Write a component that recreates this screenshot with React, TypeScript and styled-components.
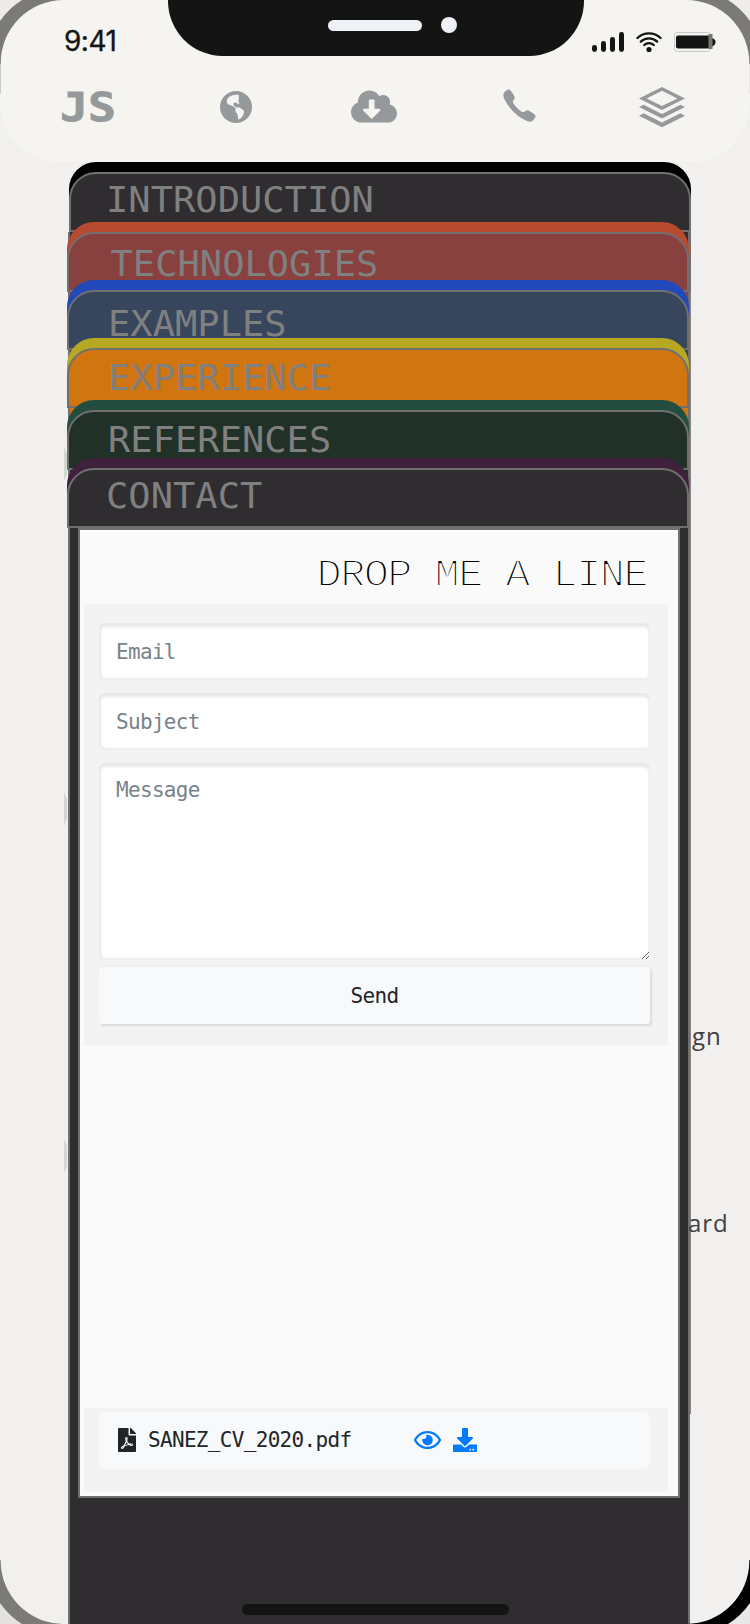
import React from "react";
import styled, { createGlobalStyle } from "styled-components";
import { FaCloudDownloadAlt, FaDownload, FaFilePdf, FaRegEye } from "react-icons/fa";
import { IoIosCall } from "react-icons/io";
import { ImStack } from "react-icons/im";

const MONO = '"DejaVu Sans Mono", monospace';
const LINE = "#717070";

const GlobalStyle = createGlobalStyle`
  *, *::before, *::after { box-sizing: border-box; }
  body { margin: 0; background: #f1f0ee; }
`;

const Screen = styled.div`
  position: relative;
  width: 750px;
  height: 1624px;
  overflow: hidden;
  background: #f1f0ee;
  font-family: ${MONO};
`;

const Header = styled.header`
  height: 162px;
  border-radius: 0 0 60px 60px;
  background: #f5f4f0;
  color: #96999b;
`;

const StatusBar = styled.div`
  display: flex;
  justify-content: space-between;
  height: 56px;
`;

const Clock = styled.div`
  width: 168px;
  padding: 22px 0 0 64px;
  font: 400 28px/38px Inter, sans-serif;
  letter-spacing: -0.5px;
  color: #141414;
  -webkit-text-stroke: 0.3px #141414;
`;

const Notch = styled.div`
  display: flex;
  gap: 19px;
  width: 416px;
  padding: 17px 0 0 160px;
  border-radius: 0 0 55px 55px;
  background: #141414;
`;

const Speaker = styled.div`
  width: 94px;
  height: 11px;
  margin-top: 3px;
  border-radius: 6px;
  background: #eef2f6;
`;

const Camera = styled.div`
  width: 16px;
  height: 16px;
  border-radius: 50%;
  background: #eef2f6;
`;

const StatusIcons = styled.div`
  width: 166px;
  padding: 28px 0 0 8px;
  svg { display: block; }
`;

const Nav = styled.nav`
  display: flex;
  align-items: center;
  height: 102px;
  padding-left: 60px;
`;

const Logo = styled.div`
  width: 54px;
  height: 46px;
  font: bold 39px/46px ${MONO};
  -webkit-text-stroke: 0.8px #96999b;
  transform: translateY(1px) scaleX(1.19);
  transform-origin: 0 0;
`;

const NavItem = styled.div<{ $gap: number; $lift?: number }>`
  margin-left: ${(p) => p.$gap}px;
  padding-bottom: ${(p) => p.$lift ?? 0}px;
  svg { display: block; }
`;

const Stack = styled.main`
  display: flex;
  flex-direction: column;
  width: 623px;
  height: 1462px;
  margin-left: 68px;
`;

const Row = styled.section<{ $height: number; $back: string }>`
  display: flex;
  flex: none;
  flex-direction: column;
  justify-content: flex-end;
  height: ${(p) => p.$height}px;
  border: solid ${LINE};
  border-width: 0 3px 0 2px;
  background: ${(p) => p.$back};
`;

const RowFirst = styled(Row)`
  border-color: transparent;
`;

const Folder = styled.div<{ $edge: string; $shift: number }>`
  flex: none;
  height: 70px;
  margin: 0 ${(p) => -1 - p.$shift}px 0 ${(p) => -3 + p.$shift}px;
  padding-top: 10px;
  border-radius: 27px 27px 0 0;
  background: ${(p) => p.$edge};
`;

const Face = styled.div<{ $fill: string; $x: number; $y: number }>`
  height: 60px;
  padding: ${(p) => p.$y}px 0 0 ${(p) => p.$x}px;
  border: 2px solid ${LINE};
  border-radius: 27px 27px 0 0;
  background: ${(p) => p.$fill};
`;

const Label = styled.h2`
  margin: 0;
  font: 37px/40px ${MONO};
  letter-spacing: 0.05px;
  color: #808080;
  transform: scaleY(0.94);
  transform-origin: 0 0;
`;

const Body = styled.section`
  flex: 1;
  padding-left: 8px;
  border: solid ${LINE};
  border-width: 0 3px 0 2px;
  background: #2f2d30;
`;

const Panel = styled.div`
  display: flex;
  flex-direction: column;
  width: 602px;
  height: 970px;
  padding: 0 10px 4px 4px;
  border: 2px solid ${LINE};
  background: #fafafa;
`;

const Title = styled.h1`
  height: 74px;
  margin: 0;
  padding: 22px 21px 0 0;
  font: 42px/44px "Liberation Mono", monospace;
  letter-spacing: -1.6px;
  text-align: right;
  color: #000;
  -webkit-text-stroke: 2.1px #fafafa;
  transform: translateY(1px) scaleY(0.93);
  transform-origin: 0 60px;
`;

const Form = styled.form`
  display: flex;
  flex-direction: column;
  align-items: flex-start;
  height: 442px;
  padding: 19px 15px 0;
  background: #f3f3f3;
`;

const smallText = `
  font: 21px/30px ${MONO};
  letter-spacing: -0.68px;
`;

const fieldLook = `
  display: block;
  width: 551px;
  margin: 0 0 13px;
  padding: 0 17px;
  border: 0;
  border-radius: 6px;
  outline: 0;
  background: #fff;
  box-shadow: inset 0 3px 3px 1px #e8e8e8, inset 1px -1px 2px 1px #ececec;
  color: #212529;
  ${smallText}
  &::placeholder { color: #78828a; opacity: 1; }
`;

const Field = styled.input`
  ${fieldLook}
  height: 57px;
`;

const Message = styled.textarea`
  ${fieldLook}
  height: 197px;
  margin-bottom: 7px;
  padding-top: 12px;
  resize: vertical;
`;

const Send = styled.button`
  width: 551px;
  height: 57px;
  border: 0;
  border-radius: 3px;
  background: #f8f9fb;
  box-shadow: 2px 2px 2px #dcdcdc, 0 0 2px #e8e8e8;
  color: #212529;
  ${smallText}
`;

const Download = styled.div`
  height: 84px;
  margin-top: auto;
  padding: 4px 15px 0;
  background: #f3f3f3;
`;

const FileCard = styled.div`
  display: flex;
  align-items: center;
  width: 551px;
  height: 57px;
  padding: 0 0 2px 19px;
  border-radius: 7px;
  background: #f8f9fb;
  color: #212529;
`;

const FileName = styled.span`
  width: 266px;
  margin-left: 12px;
  ${smallText}
`;

const Action = styled.a`
  margin-right: 12px;
  color: #007bff;
  svg { display: block; }
`;

const HomeBar = styled.div`
  position: absolute;
  left: 242px;
  top: 1604px;
  width: 267px;
  height: 11px;
  border-radius: 6px;
  background: #141414;
`;

const Peek = styled.span<{ $x: number; $y: number }>`
  position: absolute;
  left: ${(p) => p.$x}px;
  top: ${(p) => p.$y}px;
  font: 400 24px/30px "Open Sans", sans-serif;
  letter-spacing: 0.9px;
  color: #403e41;
`;

const Arrow = styled.svg<{ $y: number }>`
  position: absolute;
  left: 64px;
  top: ${(p) => p.$y}px;
`;

const EdgeLine = styled.div`
  position: absolute;
  left: 690px;
  top: 290px;
  width: 1px;
  height: 1124px;
  background: #8a8583;
`;

const EdgeTail = styled.div`
  position: absolute;
  left: 690px;
  top: 1414px;
  width: 1px;
  height: 210px;
  background: #f1f0ee;
`;

const CornerArt = styled.svg<{ $right?: boolean; $bottom?: boolean }>`
  position: absolute;
  ${(p) => (p.$right ? "right: 0;" : "left: 0;")}
  ${(p) => (p.$bottom ? "bottom: 0;" : "top: 0;")}
  transform: scale(${(p) => (p.$right ? -1 : 1)}, ${(p) => (p.$bottom ? -1 : 1)});
`;

interface CornerProps {
  ring: string;
  outside: string;
  right?: boolean;
  bottom?: boolean;
}

function Corner({ ring, outside, right, bottom }: CornerProps) {
  return (
    <CornerArt width="96" height="96" $right={right} $bottom={bottom}>
      <path d="M0 0H64A63 63 0 0 0 0.7 64H0Z" fill={ring} />
      <path d="M0 0H22A75 75 0 0 0 0 21Z" fill={outside} />
      {!bottom && <path d="M0.5 60V94" stroke={ring} strokeOpacity={right ? 0.1 : 0.35} />}
    </CornerArt>
  );
}

function Globe() {
  return (
    <svg width="32" height="32" viewBox="0 0 32 32">
      <circle cx="16" cy="16" r="16" fill="currentColor" />
      <path
        d="M18.8 3.8C14.5 3.2 10 4.3 7.6 7.4C6.3 9.3 6.6 12 8.3 13.2C9.8 14.3 11.8 14.3 13.1 15.2C14.5 16 15.4 17.4 16.6 17.6L16.9 16.2C15.6 16 14.1 15 13.5 13.7C13 12.3 14.3 11.2 15.7 11.5C17 11.8 17.4 13 18.9 13.2L19.3 11.7C18.2 11.1 18.1 9.3 18.8 8.2C19.4 7 18.2 5.3 18.8 3.8Z"
        fill="#f5f4f0"
      />
      <path
        d="M15.7 17.8C17.3 15.8 19.4 15.8 20.7 17.2C22.2 18.3 24.2 18.8 24 21C23.8 24.5 21.4 27.3 18.3 28.8C17.7 26.3 18.2 24.2 17 22.4C15.6 21.2 14.7 19.6 15.7 17.8Z"
        fill="#f5f4f0"
      />
    </svg>
  );
}

function StatusGlyphs() {
  return (
    <svg width="140" height="28" viewBox="592 28 140 28">
      <g fill="#141414">
        <rect x="592" y="45" width="5" height="7" rx="2.4" />
        <rect x="601" y="41" width="5" height="11" rx="2.4" />
        <rect x="610" y="37" width="5" height="15" rx="2.4" />
        <rect x="619" y="32" width="5" height="20" rx="2.4" />
        <circle cx="649" cy="49.5" r="2.6" />
        <path d="M712 38Q715.500 39 715.500 42T712 46.500Z" />
        <rect x="676" y="35.500" width="34" height="13" rx="2" />
      </g>
      <g fill="none" stroke="#141414" strokeWidth="2.3" strokeLinecap="round">
        <path d="M644.2 45A7 7 0 0 1 653.8 45" />
        <path d="M640.8 41.600A12 12 0 0 1 657.2 41.600" />
        <path d="M637.4 38A17 17 0 0 1 660.6 38" />
      </g>
      <rect x="674.500" y="32.500" width="36" height="19" rx="3" fill="none" stroke="#c9c8c5" />
      <rect x="708.500" y="34" width="4" height="15" fill="#777673" />
    </svg>
  );
}

const folders = [
  { label: "INTRODUCTION", edge: "#000", fill: "#2f2d30", back: "transparent", height: 70, shift: 2, x: 35, y: 7.5 },
  { label: "TECHNOLOGIES", edge: "#b84a30", fill: "#88413f", back: "#2f2d30", height: 60, shift: 0, x: 41.5, y: 11.5 },
  { label: "EXAMPLES", edge: "#2149ba", fill: "#37465d", back: "#88413f", height: 58, shift: 0, x: 39, y: 13.5 },
  { label: "EXPERIENCE", edge: "#b6a823", fill: "#d17511", back: "#37465d", height: 58, shift: 0, x: 39, y: 9.5 },
  { label: "REFERENCES", edge: "#234e3f", fill: "#223128", back: "#d17511", height: 62, shift: 0, x: 39, y: 9.5 },
  { label: "CONTACT", edge: "#3f213c", fill: "#2f2d30", back: "#223128", height: 58, shift: 0, x: 37, y: 7.5 },
];

export default function App() {
  return (
    <Screen>
      <GlobalStyle />
      {[447, 792, 1139].map((y) => (
        <Arrow key={y} $y={y} width="6" height="34">
          <path d="M0 0L3 7V27L0 34Z" fill="#d3d7d4" />
        </Arrow>
      ))}
      <Header>
        <StatusBar>
          <Clock>9:41</Clock>
          <Notch>
            <Speaker />
            <Camera />
          </Notch>
          <StatusIcons>
            <StatusGlyphs />
          </StatusIcons>
        </StatusBar>
        <Nav>
          <Logo>JS</Logo>
          <NavItem $gap={106}><Globe /></NavItem>
          <NavItem $gap={99} $lift={2}><FaCloudDownloadAlt size={37} style={{ width: 46 }} /></NavItem>
          <NavItem $gap={101} $lift={3}><IoIosCall size={43} /></NavItem>
          <NavItem $gap={98}><ImStack size={46} /></NavItem>
        </Nav>
      </Header>
      <Stack>
        {folders.map((f, i) => {
          const Wrap = i === 0 ? RowFirst : Row;
          return (
            <Wrap key={f.label} $height={f.height} $back={f.back}>
              <Folder $edge={f.edge} $shift={f.shift}>
                <Face $fill={f.fill} $x={f.x} $y={f.y}>
                  <Label>{f.label}</Label>
                </Face>
              </Folder>
            </Wrap>
          );
        })}
        <Body>
          <Panel>
            <Title>DROP ME A LINE</Title>
            <Form>
              <Field placeholder="Email" />
              <Field placeholder="Subject" />
              <Message placeholder="Message" />
              <Send type="button">Send</Send>
            </Form>
            <Download>
              <FileCard>
                <FaFilePdf size={24} style={{ width: 18 }} />
                <FileName>SANEZ_CV_2020.pdf</FileName>
                <Action><FaRegEye size={24} style={{ width: 27 }} /></Action>
                <Action><FaDownload size={24} /></Action>
              </FileCard>
            </Download>
          </Panel>
        </Body>
      </Stack>
      <EdgeLine />
      <EdgeTail />
      <Peek $x={692} $y={1021}>gn</Peek>
      <Peek $x={688} $y={1208}>ard</Peek>
      <HomeBar />
      <Corner ring="#7b7a77" outside="#ecebea" />
      <Corner ring="#7b7a77" outside="#eeedec" right />
      <Corner ring="#7b7a77" outside="#e3e2e0" bottom />
      <Corner ring="#000" outside="#e8e7e5" right bottom />
    </Screen>
  );
}
